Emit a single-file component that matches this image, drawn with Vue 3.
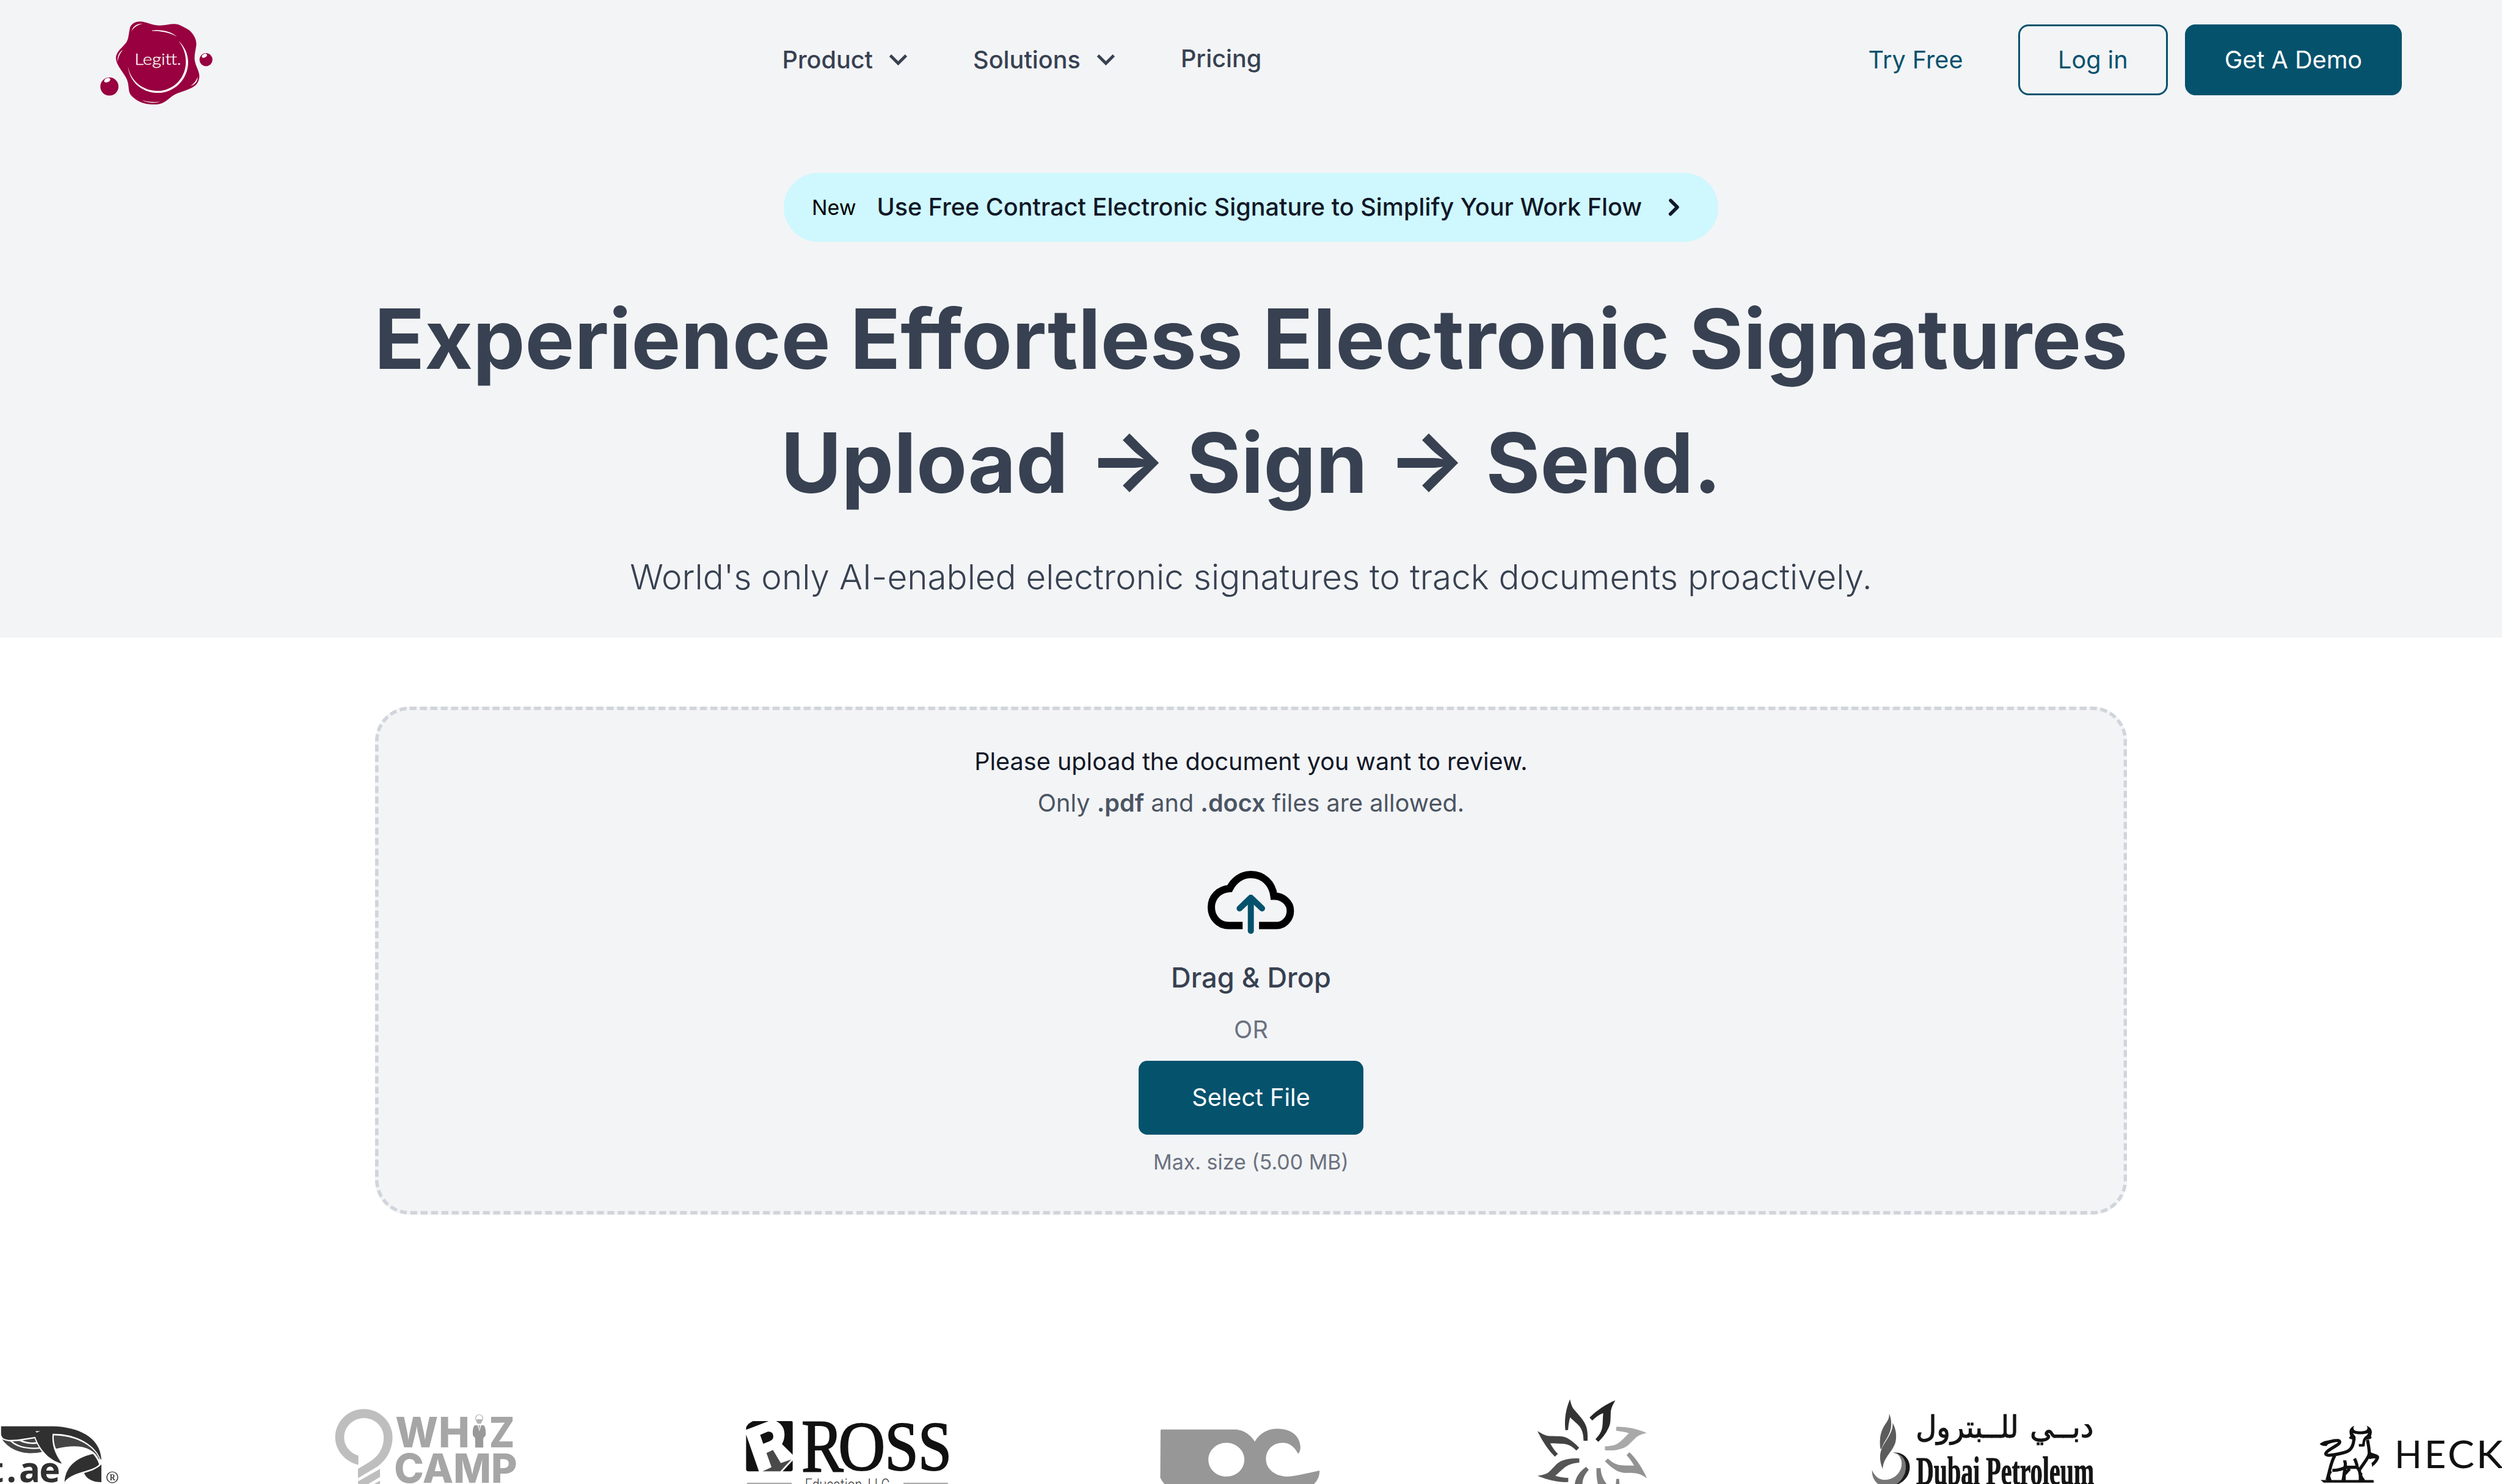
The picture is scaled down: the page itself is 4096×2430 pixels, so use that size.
<script setup>
const menus = ['Product', 'Solutions']
</script>

<template>
  <div class="page">
    <section class="hero">
      <header class="bar">
        <svg class="brand" viewBox="96 84 786 588">
          <g fill="#98003f">
            <path d="M375 89C420 91 460 117 510 117C560 115 600 98 640 110C660 120 690 132 715 150C745 178 763 210 764 245C762 280 750 310 752 355C758 400 785 430 785 470C782 520 755 540 720 555C680 575 640 580 600 605C560 635 540 660 490 665C430 668 380 658 340 628C310 605 298 590 295 560C292 530 290 500 270 470C245 430 205 385 205 340C210 290 255 270 280 230C295 205 295 160 305 125C320 100 345 88 375 89Z" />
            <circle cx="160" cy="541" r="63" />
            <circle cx="831" cy="354" r="45" />
          </g>
          <g fill="#fff">
            <ellipse cx="145" cy="497" rx="23" ry="14" transform="rotate(-24 145 497)" />
            <ellipse cx="820" cy="327" rx="19" ry="12" transform="rotate(-28 820 327)" />
            <path d="M289 400C298 510 390 585 495 585C612 585 707 490 707 370C705 310 680 260 640 224C674 265 691 315 691 370C691 480 605 571 495 571C400 571 308 510 289 400Z" />
            <path d="M457 151C520 143 592 160 630 195C580 167 530 156 457 155Z" />
            <path d="M313 157C323 122 350 103 393 104C355 112 330 128 313 157Z" />
            <path d="M217 370C213 330 228 300 255 285C232 310 222 335 217 370Z" />
            <path d="M385 636C420 648 465 651 512 646C470 658 420 656 385 636Z" />
            <path d="M724 536C750 518 763 500 773 474C775 505 755 527 724 536Z" />
            <text x="335" y="388" font-family="Lato, sans-serif" font-weight="300" stroke="#fff" stroke-width="1.500" font-size="112" textLength="324" lengthAdjust="spacingAndGlyphs">Legitt.</text>
          </g>
        </svg>
        <nav class="links">
          <a v-for="m in menus" :key="m" class="link">
            {{ m }}
            <svg class="caret" viewBox="0 0 24 24"><path d="M7.41 8.59 12 13.17l4.59-4.58L18 10l-6 6-6-6z" /></svg>
          </a>
          <a class="link plain">Pricing</a>
        </nav>
        <div class="actions">
          <a class="try">Try Free</a>
          <a class="btn outline">Log in</a>
          <a class="btn solid">Get A Demo</a>
        </div>
      </header>

      <a class="pill">
        <span class="tag">New</span>
        <span class="pill-text">Use Free Contract Electronic Signature to Simplify Your Work Flow</span>
        <svg class="next" viewBox="0 0 20 20"><path d="M7.3 14.7a1 1 0 0 1 0-1.4L10.6 10 7.3 6.7a1 1 0 0 1 1.4-1.4l4 4a1 1 0 0 1 0 1.4l-4 4a1 1 0 0 1-1.4 0z" /></svg>
      </a>
      <h1>Experience Effortless Electronic Signatures<br>Upload → Sign → Send.</h1>
      <p class="sub">World's only AI-enabled electronic signatures to track documents proactively.</p>
    </section>

    <section class="drop">
      <svg class="dash" viewBox="0 0 1014 294"><rect x="1" y="1" width="1012" height="292" rx="19" /></svg>
      <p class="ask">Please upload the document you want to review.</p>
      <p class="only">Only <b>.pdf</b> and <b>.docx</b> files are allowed.</p>
      <svg class="cloud" viewBox="0 0 200 148">
        <path d="M81 126.500H48C25 126.500 8.500 107 8.500 84C8.500 61 26 42.500 51 41C61 21 79 8.500 100 8.500C129 8.500 150 29 153.500 58.500C174 58.500 191.500 73 191.500 92.500C191.500 112 176 126.500 160 126.500H119" fill="none" stroke="#000" stroke-width="17" />
        <path d="M100 139V62M74 87L100 62L126 87" fill="none" stroke="#05526d" stroke-width="14" stroke-linecap="round" stroke-linejoin="round" />
      </svg>
      <p class="drag">Drag &amp; Drop</p>
      <p class="or">OR</p>
      <button class="select">Select File</button>
      <p class="max">Max. size (5.00 MB)</p>
    </section>

    <section class="clients">
      <svg viewBox="0 3200 480 236" style="flex-grow: 480">
        <g transform="translate(0 3200) scale(.40816 .33333)" fill="#303030">
          <path d="M6 308H300C440 312 568 380 575 538H571C540 440 440 358 298 360C292 430 310 500 351 567C280 545 225 470 200 381C160 388 110 402 62 402C20 402 6 385 6 355Z" />
          <path d="M201 342H228L208 351Z" fill="#fff" />
          <path d="M527 500C542 520 555 545 562 572C535 620 400 625 366 696C370 600 420 530 527 500Z" />
          <path d="M575 573V696C530 696 490 675 477 632C510 622 550 605 575 573Z" />
          <g fill="#454545">
            <path d="M12 398C30 408 45 411 60 414C95 455 150 470 225 464L238 486C210 495 160 498 125 488C75 475 35 440 12 398Z" />
            <path d="M70 413L110 409C140 428 175 432 210 430L221 454C160 462 110 450 70 413Z" />
            <path d="M126 405L196 391L205 418C175 422 150 418 126 405Z" />
            <path d="M305 371C400 368 530 425 565 537H561C530 450 440 425 318 464C306 430 304 400 305 371Z" />
          </g>
          <ellipse cx="637" cy="662" rx="31" ry="38" fill="none" stroke="#454545" stroke-width="6" />
        </g>
        <text x="-27 15 44 91" y="3432" font-family="'Open Sans', sans-serif" font-weight="700" font-size="82" fill="#303030">t.ae</text>
        <text x="254" y="3427" font-family="'Liberation Serif', serif" font-weight="700" font-size="20" textLength="13" lengthAdjust="spacingAndGlyphs" fill="#454545">R</text>
      </svg>

      <svg viewBox="480 3200 980 236" style="flex-grow: 980">
        <g transform="translate(740 3200) scale(.33333)">
          <g fill="#bebebe">
            <path d="M271 511V575C180 555 110 475 110 385C110 275 200 188 310 188C420 188 508 280 508 385C508 470 460 550 400 590L268 668V604L340 560C410 520 447 460 447 385C447 310 385 250 310 250C235 250 172 310 172 385C172 445 215 495 271 511Z" />
            <path d="M268 690L421 604V660L340 708H268Z" />
            <path d="M360 720L421 685V720Z" />
          </g>
          <circle cx="1110" cy="252" r="25" fill="none" stroke="#b4b4b4" stroke-width="5" />
          <path d="M1086 262Q1110 254 1134 262L1122 290H1098Z" fill="#b4b4b4" />
          <path d="M1080 300H1140C1155 310 1156 345 1155 370L1138 390V455H1082V390L1066 370C1064 340 1066 310 1080 300Z" fill="#999" />
          <path d="M1098 300L1111 343L1124 300Z" fill="#fff" />
          <path d="M1106 302L1111 335L1116 302Z" fill="#999" />
        </g>
        <g font-family="Inter, sans-serif" font-weight="800" fill="#a6a6a6">
          <text x="916" y="3351" font-size="97" textLength="99" lengthAdjust="spacingAndGlyphs">W</text>
          <text x="1016" y="3351" font-size="97" textLength="72" lengthAdjust="spacingAndGlyphs">H</text>
          <text x="1133" y="3351" font-size="97" textLength="59" lengthAdjust="spacingAndGlyphs">Z</text>
          <text x="913" y="3434" font-size="94" textLength="285" lengthAdjust="spacingAndGlyphs">CAMP</text>
        </g>
      </svg>

      <svg viewBox="1460 3200 980 236" style="flex-grow: 980">
        <g transform="translate(1680 3240) scale(.35714 .33333)" fill="#111">
          <path d="M134 212V200C136 180 160 160 180 152H281Z" />
          <path d="M328 152H428Q436 152 436 160V385L367 312C395 260 390 180 328 152Z" />
          <path d="M134 245L217 500H148Q134 500 134 486Z" />
          <path d="M225 247L275 225C300 222 312 240 310 262C308 282 300 287 245 309Z" />
          <path d="M266 373L308 352L359 443L427 418L356 500H241L299 472Z" fill="#4a4a4a" />
          <path d="M436 425V490Q434 500 424 500H371Z" />
          <path d="M140 584H430M1154 584H1442" stroke="#777" stroke-width="5" />
        </g>
        <g font-family="'Liberation Serif', serif" fill="#111" stroke="#111" stroke-width="3">
          <text x="1856" y="3406" font-size="173" textLength="97" lengthAdjust="spacingAndGlyphs">R</text>
          <text x="1941" y="3404" font-size="162" textLength="109" lengthAdjust="spacingAndGlyphs">O</text>
          <text x="2049" y="3404" font-size="162" textLength="78" lengthAdjust="spacingAndGlyphs">S</text>
          <text x="2126" y="3404" font-size="162" textLength="78" lengthAdjust="spacingAndGlyphs">S</text>
        </g>
        <text x="1864" y="3450" font-family="Roboto, sans-serif" font-weight="300" font-size="36" textLength="196" lengthAdjust="spacingAndGlyphs" fill="#333">Education, LLC</text>
      </svg>

      <svg viewBox="2440 3200 860 236" style="flex-grow: 860">
        <path transform="translate(2640 3260) scale(.33333)" fill="#979797" fill-rule="evenodd" d="M142 150H660C720 155 765 190 792 234C830 175 880 145 950 145C1060 145 1109 210 1109 275C1109 295 1103 310 1093 318C1065 265 1030 242 985 242C920 242 870 290 870 355C870 430 940 477 1020 477C1070 475 1150 455 1242 435C1243 470 1230 505 1200 532H168C155 518 143 500 136 485L138 155ZM595 242C526 242 470 295 470 360C470 425 526 477 595 477C664 477 720 425 720 360C720 295 664 242 595 242Z" />
      </svg>

      <svg viewBox="3300 3200 760 236" style="flex-grow: 760">
        <g transform="translate(3500 3200) scale(.33333)">
          <path fill="#353535" d="M402 120C408 150 415 170 425 185C470 240 500 265 515 310C523 335 526 365 524 408H496C496 370 490 340 470 310C450 285 420 265 403 245C395 275 390 305 389 333L370 335C362 260 372 190 402 120Z" />
          <path fill="#262626" d="M717 127C695 165 687 185 685 210C683 270 685 290 668 322C650 360 625 390 599 416L579 397C605 370 622 345 627 310C631 280 629 250 633 216C605 225 580 245 557 267L538 247C590 195 650 155 717 127Z" />
          <path fill="#434343" d="M176 340C205 357 225 370 250 374C310 378 335 372 370 384C410 400 440 430 466 457L446 476C420 450 395 435 360 430C330 427 300 428 265 425C280 455 298 480 318 500L297 519C245 465 205 400 176 340Z" />
          <path fill="#a9a9a9" d="M723 311C800 310 865 325 935 354C895 363 880 370 860 386C820 425 805 445 775 458C735 474 690 478 645 474V447C690 446 720 440 750 415C775 393 790 375 811 355C780 345 750 342 723 338Z" />
          <path fill="#555" d="M467 531V560C430 562 400 570 370 590C345 610 320 635 300 651C330 660 360 665 390 666V695C320 698 250 680 177 652C215 645 235 640 250 630C290 595 305 565 345 547C380 532 425 528 467 531Z" />
          <path fill="#939393" d="M665 531C690 555 715 570 750 577C780 580 815 580 847 581C830 550 815 528 795 508L815 488C865 535 905 600 936 667C905 648 885 637 860 634C800 630 780 636 745 624C710 610 675 580 645 550Z" />
          <path fill="#6b6b6b" d="M514 590L533 610C505 640 490 670 488 712H435C440 665 465 625 514 590Z" />
          <path fill="#828282" d="M586 598H615C617 640 630 675 660 712H596C587 670 585 640 586 598Z" />
          <path fill="#828282" d="M724 674L743 672L746 712H720Z" />
        </g>
      </svg>

      <svg viewBox="4060 3200 1020 236" style="flex-grow: 1020">
        <g transform="translate(4300 3230) scale(.3699 .33333)" fill="#5c5c5c">
          <path d="M199 130C215 170 215 220 205 250C190 300 165 325 150 375H144C138 320 140 270 165 220C185 185 200 170 199 130Z" />
          <path d="M220 193C245 240 248 300 235 340C215 400 160 440 159 515C140 470 135 410 155 365C180 310 225 260 220 193Z" />
          <path fill="#1a1a1a" d="M222 401C280 390 328 440 328 500C328 560 295 600 255 620H230C290 580 305 540 300 490C295 440 265 405 222 401Z" />
          <path fill="#777" d="M240 403C280 415 305 450 303 500C300 560 275 600 243 620H130C100 590 90 560 92 522C110 570 140 590 170 590C230 590 275 540 277 480C278 445 265 420 240 403Z" />
        </g>
        <g fill="#141414" stroke="#141414" stroke-width="1.500" font-family="'DejaVu Sans', sans-serif" font-size="70" text-anchor="middle">
          <text x="4773" y="3329" textLength="148" lengthAdjust="spacingAndGlyphs">دبــي</text>
          <text x="4554" y="3329" textLength="238" lengthAdjust="spacingAndGlyphs">للــبترول</text>
        </g>
        <text x="4436" y="3438" font-family="'Liberation Serif', serif" font-weight="700" font-size="92" textLength="412" lengthAdjust="spacingAndGlyphs" fill="#141414" stroke="#141414" stroke-width="1.500">Dubai Petroleum</text>
      </svg>

      <svg viewBox="5080 3200 712 236" style="flex-grow: 712">
        <g transform="translate(5340 3270) scale(.33333)" fill="none" stroke="#111" stroke-width="22" stroke-linejoin="round">
          <path d="M130 219C165 200 228 186 231 206C234 228 134 262 134 290C140 306 190 296 230 288C290 276 326 264 330 180" />
          <path d="M198 300C170 340 165 400 143 472M180 404C225 404 265 390 268 378C275 355 266 350 266 334M266 382H352C352 360 340 335 334 322" />
          <path d="M170 408C140 440 160 455 164 476M268 388C262 420 262 440 254 474M300 392L262 434V476M352 384C372 400 376 440 374 474" />
          <path d="M366 404C400 350 430 320 436 290C438 260 430 230 424 192M378 420C372 450 384 455 398 476" />
          <path d="M436 284C455 300 490 300 494 312C490 335 475 345 462 362M432 318C445 308 470 308 490 310" />
          <path d="M425 168C400 180 398 200 396 230H364" stroke-width="18" />
          <path fill="#111" stroke="none" d="M333 93C322 105 325 122 340 128C362 134 395 134 412 126C427 118 426 103 417 93C446 104 464 125 448 165L453 179C440 190 425 186 405 196C412 170 420 160 429 144C395 156 355 156 322 144L341 170V196C320 186 310 190 294 179L305 165C290 125 305 104 333 93ZM92 220C115 202 140 196 170 194L140 234C115 236 100 232 92 220ZM98 471H465Q470 480 466 489H120ZM452 352L475 335L480 350L457 381Z" />
        </g>
        <g font-family="Lato, sans-serif" fill="#111">
          <text x="5544" y="3399" font-size="88" textLength="63" lengthAdjust="spacingAndGlyphs">H</text>
          <text x="5613" y="3399" font-size="88" textLength="50" lengthAdjust="spacingAndGlyphs">E</text>
          <text x="5667" y="3399" font-size="88" textLength="62" lengthAdjust="spacingAndGlyphs">C</text>
          <text x="5733" y="3399" font-size="88" textLength="62" lengthAdjust="spacingAndGlyphs">K</text>
        </g>
      </svg>
    </section>
  </div>
</template>

<style>
html {
  /* 1rem is ten units of a 1448-unit wide design */
  font-size: calc(100vw / 144.8);
  overflow: hidden;
}
body {
  background: #fff;
}
</style>

<style scoped>
.page {
  height: 100vh;
  overflow: hidden;
  font-family: Inter, sans-serif;
  font-optical-sizing: none;
  font-size: 1.4rem;
  color: #374151;
}
p,
h1 {
  margin: 0;
}
.hero {
  height: 36.9rem;
  background: #f3f4f6;
  display: flex;
  flex-direction: column;
  align-items: center;
}
.bar {
  box-sizing: border-box;
  width: 100%;
  height: 10rem;
  flex: none;
  display: flex;
  align-items: flex-start;
  padding: 1.4rem 5.8rem 0;
}
.brand {
  width: 6.55rem;
  height: 4.9rem;
  margin-top: -0.2rem;
}
.links {
  display: flex;
  height: 4.1rem;
  align-items: center;
  margin-left: 32.92rem;
  font-weight: 500;
}
.link {
  display: flex;
  align-items: center;
  margin-right: 3.3rem;
}
.plain {
  margin: -0.1rem 0 0;
}
.caret {
  width: 2.08rem;
  height: 2.08rem;
  margin-left: 0.42rem;
  fill: #374151;
}
.actions {
  display: flex;
  align-items: center;
  margin-left: auto;
  color: #05526d;
}
.btn {
  box-sizing: border-box;
  height: 4.1rem;
  display: flex;
  align-items: center;
  justify-content: center;
  border: 3px solid #05526d;
  border-radius: 0.6rem;
}
.outline {
  width: 8.65rem;
  margin: 0 1rem 0 3.2rem;
}
.solid {
  width: 12.55rem;
  background: #05526d;
  color: #fff;
}
.pill {
  box-sizing: border-box;
  width: 54.1rem;
  height: 4rem;
  border-radius: 2rem;
  background: #cff7fe;
  display: flex;
  align-items: center;
  padding-left: 1.63rem;
  white-space: nowrap;
}
.tag {
  font-size: 1.2rem;
  color: #000;
  margin-right: 1.2rem;
}
.pill-text {
  font-weight: 500;
  color: #111827;
}
.next {
  width: 2rem;
  height: 2rem;
  margin-left: 0.83rem;
  fill: #111827;
}
h1 {
  margin-top: 2rem;
  font-size: 4.8rem;
  line-height: 7.2rem;
  font-weight: 700;
  text-align: center;
  white-space: nowrap;
}
.sub {
  margin-top: 1.6rem;
  font-size: 2rem;
  line-height: 2.8rem;
  font-weight: 300;
  white-space: nowrap;
}
.drop {
  position: relative;
  box-sizing: border-box;
  width: 101.4rem;
  height: 29.4rem;
  margin: 4rem auto 0;
  padding-top: 2.03rem;
  border-radius: 2rem;
  background: #f3f4f6;
  display: flex;
  flex-direction: column;
  align-items: center;
  line-height: 2.4rem;
}
.dash {
  position: absolute;
  inset: 0;
  width: 100%;
  height: 100%;
}
.dash rect {
  fill: none;
  stroke: #d1d5db;
  stroke-width: 2;
  stroke-dasharray: 4 2.0032;
}
.ask {
  color: #111827;
}
.only {
  color: #4b5563;
}
.only b {
  font-weight: 600;
}
.cloud {
  width: 5rem;
  height: 3.7rem;
  margin-top: 2.67rem;
}
.drag {
  margin-top: 1.3rem;
  font-size: 1.6rem;
  font-weight: 500;
}
.or {
  margin-top: 0.63rem;
  color: #6b7280;
}
.select {
  width: 13rem;
  height: 4.3rem;
  margin: 0.57rem 0 0.38rem;
  padding: 0;
  border: 0;
  border-radius: 0.5rem;
  background: #05526d;
  color: #fff;
  font: inherit;
}
.max {
  font-size: 1.2rem;
  color: #6b7280;
}
.clients {
  display: flex;
  margin-top: 9.7rem;
}
.clients svg {
  flex: 1 1 0;
  min-width: 0;
  height: 5.9rem;
}
</style>
